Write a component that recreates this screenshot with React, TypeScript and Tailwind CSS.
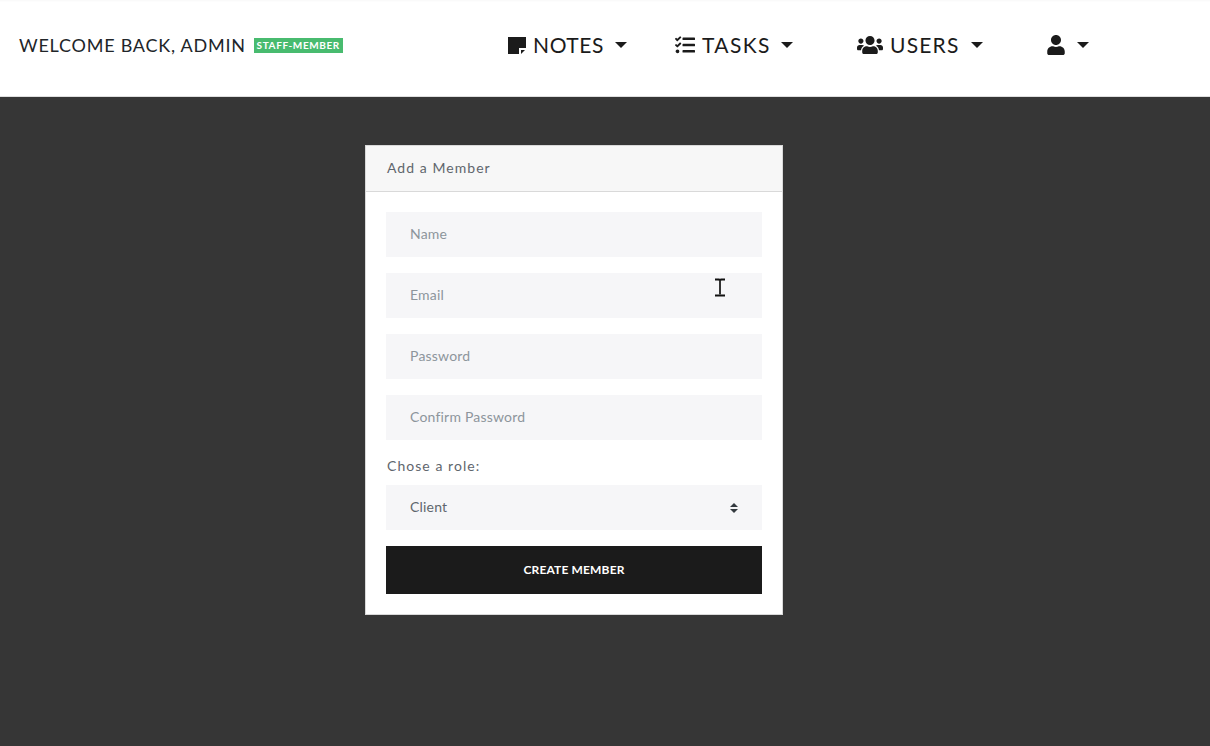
import React from 'react';
import { FaTasks, FaUsers, FaUser } from 'react-icons/fa';

const font = "font-['Lato','Noto_Sans',sans-serif]";

const Caret = ({ className = '' }: { className?: string }) => (
  <span
    className={`inline-block w-0 h-0 border-x-[6px] border-x-transparent border-t-[6px] border-t-[#1b1b1b] ${className}`}
  />
);

// square note with the folded corner, the package one is too rounded
const NoteIcon = () => (
  <svg className="mr-[7px]" width="18" height="17" viewBox="0 0 18 17" fill="#1b1b1b">
    <path d="M0 0h18v11h-7v6H0z" />
    <path d="M13 13h4l-4 4z" />
  </svg>
);

const Field = ({ placeholder, type = 'text' }: { placeholder: string; type?: string }) => (
  <input
    type={type}
    placeholder={placeholder}
    className="block w-full h-[45px] bg-[#f6f6f8] pl-6 pr-4 pb-[2px] text-sm tracking-[0.2px] text-[#6c757d] placeholder:text-[#8d959c] outline-none"
  />
);

const NavItem = ({
  icon,
  label,
  className,
  labelClass = '',
  caretClass,
}: {
  icon: React.ReactNode;
  label?: string;
  className: string;
  labelClass?: string;
  caretClass: string;
}) => (
  <a href="#" className={`flex items-center text-[#1b1b1b] ${className}`}>
    {icon}
    {label && <span className={`text-[21px] pb-[2px] leading-none ${labelClass}`}>{label}</span>}
    <Caret className={caretClass} />
  </a>
);

export default function App() {
  return (
    <div className={`relative min-h-screen h-[746px] overflow-hidden bg-[#363636] ${font}`}>
      <nav className="h-[97px] flex items-center pb-[6px] bg-white border-b border-[#dfdfdf] shadow-[inset_0_3px_3px_-3px_rgba(0,0,0,0.06)]">
        <div className="flex items-center w-[508px] pl-[19px]">
          <span className="text-lg tracking-[0.76px] text-[#212529] leading-none">WELCOME BACK, ADMIN</span>
          <span className="ml-2 h-[15px] w-[89px] flex items-center justify-center bg-[#48bb6f] text-white text-[10px] font-bold tracking-[0.6px] leading-none">
            STAFF-MEMBER
          </span>
        </div>
        <NavItem
          className="w-[167px]"
          icon={<NoteIcon />}
          label="NOTES"
          labelClass="tracking-[0.6px]"
          caretClass="ml-[11px]"
        />
        <NavItem
          className="w-[182px]"
          icon={<FaTasks className="text-[20px] mr-[7px]" />}
          label="TASKS"
          labelClass="tracking-[1.4px]"
          caretClass="ml-[10px]"
        />
        <NavItem
          className="w-[189px]"
          icon={<FaUsers className="text-[26px] mr-[7px]" />}
          label="USERS"
          labelClass="tracking-[1.2px]"
          caretClass="ml-[11px]"
        />
        <NavItem className="" icon={<FaUser className="text-[20px]" />} caretClass="ml-[11px]" />
      </nav>

      <div className="ml-[365px] mt-[48px] w-[418px] bg-white border border-[#d9d9d9]">
        <div className="h-[46px] flex items-center px-[21px] pb-[2px] bg-[#f7f7f7] border-b border-[#d9d9d9] text-sm tracking-[1.05px] text-[#5f666d]">
          Add a Member
        </div>
        <form className="flex flex-col px-5 pt-5 pb-5">
          <div className="flex flex-col gap-4">
            <Field placeholder="Name" />
            <Field placeholder="Email" type="email" />
            <Field placeholder="Password" type="password" />
            <Field placeholder="Confirm Password" type="password" />
          </div>
          <label className="mt-[17px] mb-[11px] ml-px text-sm leading-[17px] tracking-[1.05px] text-[#5f666d]">Chose a role:</label>
          <div className="h-[45px] flex items-center justify-between bg-[#f6f6f8] pl-6 pr-6 pb-[2px] text-sm tracking-[0.2px] text-[#5f666d]">
            <span>Client</span>
            <span className="flex flex-col gap-[2px] pt-[2px]">
              <span className="w-0 h-0 border-x-[4px] border-x-transparent border-b-[4px] border-b-[#343a40]" />
              <span className="w-0 h-0 border-x-[4px] border-x-transparent border-t-[4px] border-t-[#343a40]" />
            </span>
          </div>
          <button
            type="button"
            className="mt-4 h-12 bg-[#1b1b1b] text-white text-xs font-bold tracking-[0.15px] leading-none"
          >
            CREATE MEMBER
          </button>
        </form>
      </div>

      {/* mouse cursor over the email field */}
      <svg className="absolute left-[714px] top-[278px]" width="12" height="19" viewBox="0 0 12 19" fill="none">
        <path d="M1 1.5h4l1 1 1-1h4M1 17.5h10" stroke="#111" strokeWidth="2" />
        <path d="M6 2.5v14" stroke="#333" strokeWidth="2" />
      </svg>
    </div>
  );
}
